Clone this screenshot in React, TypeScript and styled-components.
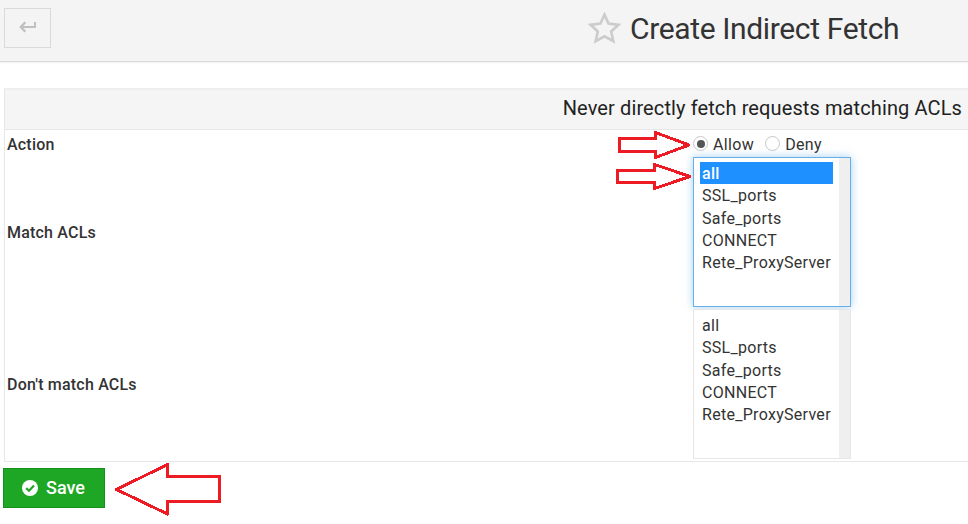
import React, { useState } from "react";
import styled, { createGlobalStyle } from "styled-components";

const GlobalStyle = createGlobalStyle`
  * { box-sizing: border-box; }
  body {
    margin: 0;
    background: #fff;
    color: #333;
    font: 16px/22px Roboto, "Liberation Sans", sans-serif;
    overflow: hidden;
  }
`;

const Page = styled.div`
  position: relative;
  width: 968px;
  height: 524px;
  overflow: hidden;
`;

const Header = styled.header`
  display: flex;
  align-items: flex-start;
  height: 62px;
  padding: 8px 0 0 4px;
  background: #f4f4f4;
  border-bottom: 1px solid #d9d9d9;
  box-shadow: 0 1px 2px rgba(0, 0, 0, 0.06);
`;

const BackButton = styled.button`
  display: flex;
  align-items: center;
  justify-content: center;
  width: 47px;
  height: 40px;
  padding: 0 0 2px;
  background: #f4f4f4;
  border: 1px solid #dadada;
`;

const TitleGroup = styled.div`
  display: flex;
  align-items: center;
  gap: 9px;
  height: 40px;
  margin-left: 537px;
`;

const Title = styled.h1`
  margin: 0;
  padding-top: 2px;
  font-size: 30px;
  line-height: 40px;
  font-weight: 400;
  letter-spacing: -0.36px;
  white-space: nowrap;
`;

const Panel = styled.section`
  width: 972px;
  height: 374px;
  margin: 26px 0 0 4px;
  border: 1px solid #e7e7e7;
  border-top: 2px solid #eee;
`;

const PanelHeading = styled.h2`
  display: flex;
  align-items: center;
  justify-content: flex-end;
  height: 40px;
  margin: 0;
  padding: 0 13px 4px 0;
  background: #f5f5f5;
  border-bottom: 1px solid #e7e7e7;
  color: #222;
  font-size: 20px;
  font-weight: 400;
  letter-spacing: 0.11px;
`;

const FieldRow = styled.div<{ $height: number }>`
  display: grid;
  grid-template-columns: 686px 1fr;
  align-items: center;
  height: ${(p) => p.$height}px;
  padding-left: 2px;
`;

const Label = styled.span`
  padding-top: 2px;
  font-weight: 500;
  letter-spacing: 0.2px;
`;

const RadioGroup = styled.div`
  display: flex;
  gap: 11px;
`;

const RadioLabel = styled.label`
  display: flex;
  align-items: center;
  gap: 5px;
  letter-spacing: 0.35px;
`;

const RadioText = styled.span`
  padding-top: 2px;
`;

const Radio = styled.input`
  appearance: none;
  display: grid;
  place-items: center;
  width: 15px;
  height: 15px;
  margin: 0;
  background: #fff;
  border: 1px solid #c8c8c8;
  border-radius: 50%;
  &:checked::before {
    content: "";
    width: 8px;
    height: 8px;
    border-radius: 50%;
    background: #555;
  }
`;

const ListBox = styled.div<{ $focused?: boolean }>`
  display: grid;
  grid-template-columns: 1fr 11px;
  width: 158px;
  height: 150px;
  background: #fff;
  border: 1px solid ${(p) => (p.$focused ? "#66afe9" : "#e6e6e6")};
  box-shadow: ${(p) => (p.$focused ? "0 0 8px rgba(102, 175, 233, 0.6)" : "none")};
`;

const Options = styled.div`
  padding: 4px 6px;
`;

const Option = styled.div<{ $selected?: boolean }>`
  height: 22.3px;
  padding-left: 2px;
  line-height: 24.3px;
  letter-spacing: 0.29px;
  white-space: nowrap;
  color: ${(p) => (p.$selected ? "#fff" : "#333")};
  font-weight: ${(p) => (p.$selected ? 500 : 400)};
  background: ${(p) => (p.$selected ? "#1e90ff" : "transparent")};
`;

const ScrollTrack = styled.div`
  background: #efefef;
`;

const SaveButton = styled.button`
  display: flex;
  align-items: center;
  gap: 8px;
  width: 102px;
  height: 40px;
  margin: 6px 0 0 3px;
  padding: 0 0 0 18px;
  background: #1ea724;
  border: 1px solid #178f1d;
  color: #fff;
  font: 500 18px/24px Roboto, sans-serif;
`;

const Annotations = styled.svg`
  position: absolute;
  inset: 0;
  pointer-events: none;
`;

const aclNames = ["all", "SSL_ports", "Safe_ports", "CONNECT", "Rete_ProxyServer"];

const arrows = [
  "619.5,138.5 655.5,138.5 655.5,132.5 689,145 655.5,157.5 655.5,151.5 619.5,151.5",
  "617.5,170.5 654.5,170.5 654.5,164.5 690,176.5 654.5,188.5 654.5,182.5 617.5,182.5",
  "116.5,489.5 167.5,464.5 167.5,476.5 219.5,476.5 219.5,501.5 167.5,501.5 167.5,514",
];

function AclList({ selected, focused }: { selected?: string; focused?: boolean }) {
  return (
    <ListBox $focused={focused} role="listbox">
      <Options>
        {aclNames.map((name) => (
          <Option key={name} role="option" $selected={name === selected}>
            {name}
          </Option>
        ))}
      </Options>
      <ScrollTrack />
    </ListBox>
  );
}

export default function App() {
  const [action, setAction] = useState("Allow");
  return (
    <Page>
      <GlobalStyle />
      <Header>
        <BackButton aria-label="Back">
          <svg width="18" height="12" viewBox="0 0 18 12" fill="none" stroke="#c0c0c0" strokeWidth="2">
            <path d="M16 1v5H2" />
            <path d="M6.3 1.2 1.8 6l4.5 4.8" strokeWidth="2.3" />
          </svg>
        </BackButton>
        <TitleGroup>
          <svg width="33" height="32" viewBox="0 0 33 32" fill="none" stroke="#ccc" strokeWidth="2.7">
            <path d="M16.5 2.8 20.5 11.6 30.5 12.8 23.2 19.5 25.3 29.2 16.5 24.4 7.7 29.2 9.8 19.5 2.5 12.8 12.5 11.6Z" />
          </svg>
          <Title>Create Indirect Fetch</Title>
        </TitleGroup>
      </Header>

      <Panel>
        <PanelHeading>Never directly fetch requests matching ACLs</PanelHeading>
        <FieldRow $height={27}>
          <Label>Action</Label>
          <RadioGroup>
            {["Allow", "Deny"].map((value) => (
              <RadioLabel key={value}>
                <Radio
                  type="radio"
                  name="action"
                  checked={action === value}
                  onChange={() => setAction(value)}
                />
                <RadioText>{value}</RadioText>
              </RadioLabel>
            ))}
          </RadioGroup>
        </FieldRow>
        <FieldRow $height={150}>
          <Label>Match ACLs</Label>
          <AclList selected="all" focused />
        </FieldRow>
        <FieldRow $height={154}>
          <Label>Don't match ACLs</Label>
          <AclList />
        </FieldRow>
      </Panel>

      <SaveButton>
        <svg width="16" height="16" viewBox="0 0 16 16">
          <circle cx="8" cy="8" r="8" fill="#fff" />
          <path d="M4.2 8.1 7 10.8 12 5.6" fill="none" stroke="#1ea724" strokeWidth="2.2" />
        </svg>
        Save
      </SaveButton>

      <Annotations width="968" height="524" viewBox="0 0 968 524">
        {arrows.map((points) => (
          <polygon
            key={points}
            points={points}
            fill="none"
            stroke="#ed1c24"
            strokeWidth="3"
            strokeLinejoin="round"
            shapeRendering="crispEdges"
          />
        ))}
      </Annotations>
    </Page>
  );
}
